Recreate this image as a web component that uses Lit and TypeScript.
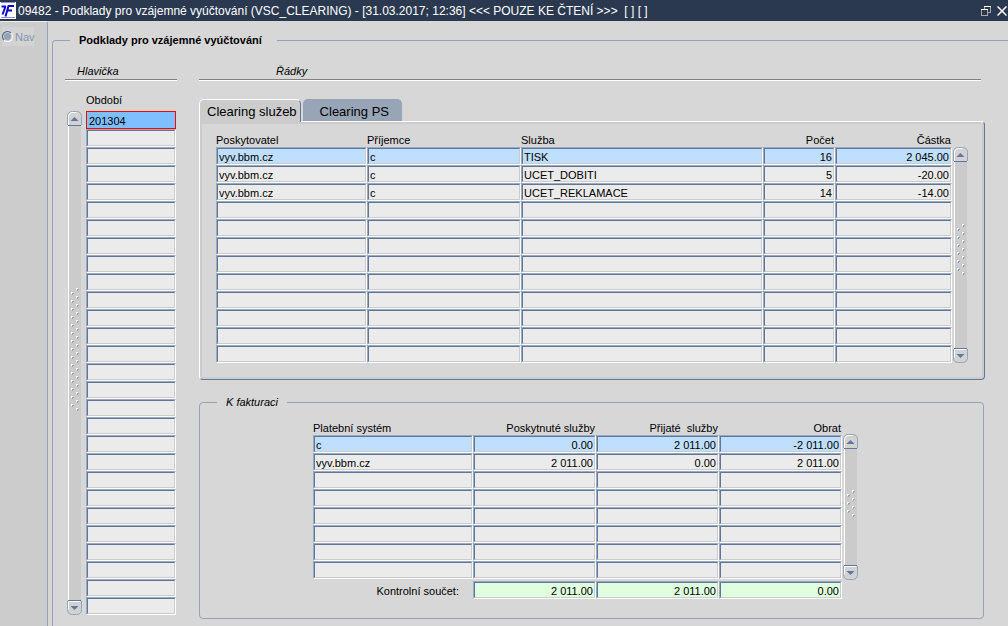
import { LitElement, html, css, svg, nothing } from "lit";
import { customElement, property } from "lit/decorators.js";
import { classMap } from "lit/directives/class-map.js";

interface Column {
  title: string;
  size?: string;
  numeric?: boolean;
}

const CLEARING_COLUMNS: Column[] = [
  { title: "Poskytovatel", size: "w151" },
  { title: "Příjemce", size: "w154" },
  { title: "Služba" },
  { title: "Počet", size: "w72", numeric: true },
  { title: "Částka", size: "w117", numeric: true },
];

const CLEARING_ROWS = [
  ["vyv.bbm.cz", "c", "TISK", "16", "2 045.00"],
  ["vyv.bbm.cz", "c", "UCET_DOBITI", "5", "-20.00"],
  ["vyv.bbm.cz", "c", "UCET_REKLAMACE", "14", "-14.00"],
];

const INVOICE_COLUMNS: Column[] = [
  { title: "Platební systém", size: "w160" },
  { title: "Poskytnuté služby", numeric: true },
  { title: "Přijaté  služby", numeric: true },
  { title: "Obrat", numeric: true },
];

const INVOICE_ROWS = [
  ["c", "0.00", "2 011.00", "-2 011.00"],
  ["vyv.bbm.cz", "2 011.00", "0.00", "2 011.00"],
];

@customElement("record-grid")
class RecordGrid extends LitElement {
  @property({ attribute: false }) columns: Column[] = [];
  @property({ attribute: false }) rows: string[][] = [];
  @property({ attribute: false }) totals: string[] = [];
  @property({ type: Number }) count = 0;
  @property({ type: Boolean }) focusedFirst = false;

  static styles = css`
    :host {
      display: block;
      min-width: 0;
    }
    table {
      width: 100%;
      table-layout: fixed;
      border-collapse: separate;
      border-spacing: 0;
    }
    .w151 { width: 151px; }
    .w154 { width: 154px; }
    .w72 { width: 72px; }
    .w117 { width: 117px; }
    .w160 { width: 160px; }
    th {
      height: 14px;
      padding: 0;
      font: 11px/14px "Liberation Sans", Arial, sans-serif;
      text-align: left;
      white-space: pre;
    }
    th.numeric {
      text-align: right;
      padding-right: 1px;
    }
    .spaced th {
      padding-bottom: 4px;
    }
    td {
      box-sizing: border-box;
      height: 18px;
      padding: 0;
      border: 1px solid;
      border-color: #9aa9bd #fff #fff #9aa9bd;
    }
    input {
      display: block;
      box-sizing: border-box;
      width: 100%;
      height: 16px;
      margin: 0;
      padding: 1px 1px 0 1px;
      border: 1px solid;
      border-color: #5f779b #ccc #ccc #5f779b;
      border-radius: 0;
      outline: none;
      background: #ebebeb;
      color: #000;
      font: 11px/13px "Liberation Sans", Arial, sans-serif;
    }
    .numeric input {
      text-align: right;
    }
    .current input {
      background: #bfdfff;
    }
    .focused td {
      border-color: #f00;
    }
    .focused input {
      background: #80bfff;
      border-color: #80bfff;
    }
    tfoot .gap {
      height: 2px;
      border: 0;
    }
    tfoot input {
      background: #dfffdf;
    }
    tfoot th {
      padding-right: 14px;
      text-align: right;
      vertical-align: bottom;
      line-height: 16px;
    }
  `;

  private cell(column: Column, value: string, prefix: string) {
    return html`<td class=${classMap({ numeric: !!column.numeric })}>
      <input type="text" readonly aria-label="${prefix} ${column.title}" .value=${value} />
    </td>`;
  }

  render() {
    const body = Array.from({ length: this.count }, (_, i) => this.rows[i] ?? []);
    return html`<table>
      <colgroup>
        ${this.columns.map((c) => html`<col class=${c.size ?? ""} />`)}
      </colgroup>
      <thead class=${classMap({ spaced: this.focusedFirst })}>
        <tr>
          ${this.columns.map(
            (c) => html`<th scope="col" class=${classMap({ numeric: !!c.numeric })}>${c.title}</th>`
          )}
        </tr>
      </thead>
      <tbody>
        ${body.map(
          (row, i) => html`<tr
            class=${classMap({ current: i === 0, focused: i === 0 && this.focusedFirst })}
          >
            ${this.columns.map((c, k) => this.cell(c, row[k] ?? "", `${i + 1}`))}
          </tr>`
        )}
      </tbody>
      ${this.totals.length
        ? html`<tfoot>
            <tr><td class="gap" colspan=${this.columns.length}></td></tr>
            <tr>
              <th scope="row">Kontrolní součet:</th>
              ${this.totals.map((v, k) => this.cell(this.columns[k + 1], v, "Kontrolní součet"))}
            </tr>
          </tfoot>`
        : nothing}
    </table>`;
  }
}

@customElement("record-scroller")
class RecordScroller extends LitElement {
  @property({ type: Number }) grips = 4;

  static styles = css`
    :host {
      display: flex;
      flex-direction: column;
      flex: none;
      width: 15px;
    }
    button {
      display: block;
      flex: none;
      width: 15px;
      height: 15px;
      padding: 0;
      border: 0;
      background: none;
    }
    svg {
      display: block;
    }
    .track {
      flex: 1;
      display: flex;
      flex-direction: column;
      align-items: center;
      margin: 0 1px;
      border-left: 1px solid #fff;
      background: #cbcbcb;
    }
    .track::before {
      content: "";
      flex: 43;
    }
    .track::after {
      content: "";
      flex: 50;
    }
  `;

  private arrow(up: boolean) {
    return up
      ? html`<svg width="15" height="15" viewBox="0 0 15 15">
          <path d="M.5 14V5.500Q.5 .5 5.500 .5H9.500Q14.500 .5 14.500 5.500V14" fill="#d2d2d2" stroke="#93a3b9" />
          <path d="M1.500 14V6Q1.500 1.500 6 1.500H9.500" fill="none" stroke="#fff" />
          <path d="M1 14.500H14" stroke="#5f779b" />
          <path d="M3.500 10L7.500 6L11.500 10Z" fill="#5f779b" />
        </svg>`
      : html`<svg width="15" height="15" viewBox="0 0 15 15">
          <path d="M.5 1V9.500Q.5 14.500 5.500 14.500H9.500Q14.500 14.500 14.500 9.500V1" fill="#d2d2d2" stroke="#93a3b9" />
          <path d="M1.500 9.500V1.500H13" fill="none" stroke="#fff" />
          <path d="M1 .5H14" stroke="#5f779b" />
          <path d="M3.500 6L7.500 10L11.500 6Z" fill="#5f779b" />
        </svg>`;
  }

  private dot(x: number, y: number) {
    return svg`<path d="M${x + 1} ${y + 1}h2v1h-1v1h-1z" fill="#93a3b9" /><path d="M${x} ${y}h2v1h-1v1h-1z" fill="#fff" />`;
  }

  render() {
    const height = (this.grips - 1) * 8 + 3;
    const right = Array.from({ length: this.grips }, (_, i) => this.dot(5, i * 8));
    const left = Array.from({ length: this.grips - 1 }, (_, i) => this.dot(0, i * 8 + 4));
    return html`
      <button type="button" aria-label="Nahoru">${this.arrow(true)}</button>
      <div class="track">
        <svg width="8" height=${height} shape-rendering="crispEdges">${right}${left}</svg>
      </div>
      <button type="button" aria-label="Dolů">${this.arrow(false)}</button>
    `;
  }
}

@customElement("app-root")
class AppRoot extends LitElement {
  static styles = css`
    :host {
      display: flex;
      flex-direction: column;
      min-height: 100vh;
      background: #d7d7d7;
      color: #000;
      font: 11px/14px "Liberation Sans", Arial, sans-serif;
    }
    .titlebar {
      display: flex;
      align-items: center;
      box-sizing: border-box;
      height: 21px;
      background: #2b3950;
      color: #fff;
    }
    .titlebar h1 {
      flex: 1;
      margin: 0 0 0 2px;
      padding-top: 1px;
      font-size: 12px;
      font-weight: 400;
      line-height: 20px;
      white-space: pre;
    }
    .titlebar svg {
      display: block;
    }
    .titlebar button {
      padding: 0;
      border: 0;
      background: none;
    }
    .window-buttons {
      display: flex;
      gap: 6px;
      padding-right: 1px;
    }
    .body {
      flex: 1;
      display: flex;
    }
    .nav {
      flex: none;
      box-sizing: border-box;
      width: 48px;
      padding: 5px 0 0 2px;
      border-top: 1px solid #eee;
      border-right: 1px solid #93a3b9;
      border-top-right-radius: 3px;
      background: #ccc;
    }
    .nav label {
      display: flex;
      align-items: center;
      gap: 2px;
      width: 32px;
      height: 19px;
      background: #d3d3d3;
      color: #8496b3;
    }
    .nav input {
      appearance: none;
      flex: none;
      box-sizing: border-box;
      width: 11px;
      height: 11px;
      margin: 0;
      border: 1px solid;
      border-color: #56657c #fff #fff #56657c;
      border-radius: 50%;
      background: #93a3b9;
      box-shadow: inset 0 0 0 1px #ccc;
    }
    fieldset {
      min-width: 0;
      margin: 0;
      border: 1px solid #93a3b9;
      border-radius: 4px;
    }
    .main {
      flex: 1;
      margin: 12px 0 0 4px;
      padding: 17px 23px 3px 12px;
      border-width: 1px 0 0 1px;
      border-radius: 4px 0 0 0;
    }
    .main > legend {
      margin-left: 5px;
      padding: 0 15px 0 9px;
      font-weight: 700;
    }
    .columns {
      display: grid;
      grid-template-columns: 112px minmax(0, 1fr);
      column-gap: 22px;
    }
    h2 {
      margin: 0;
      padding: 0 0 1px 12px;
      border-bottom: 1px solid #808080;
      box-shadow: 0 1px #fff;
      font-size: 11px;
      font-weight: 400;
      font-style: italic;
      line-height: 14px;
    }
    .lines h2 {
      margin-right: 4px;
      padding-left: 77px;
    }
    .periods {
      display: flex;
      gap: 4px;
      padding: 13px 1px 0 2px;
    }
    .periods record-grid {
      flex: 1;
    }
    .periods record-scroller {
      margin-top: 18px;
    }
    .clearing record-scroller {
      margin-top: 14px;
    }
    .tabs {
      display: flex;
      align-items: flex-start;
      gap: 2px;
      padding-top: 19px;
    }
    .tabs button {
      box-sizing: border-box;
      height: 22px;
      padding: 2px 12px 0 16px;
      border: 1px solid #98a5b7;
      border-bottom: 0;
      border-radius: 5px 5px 0 0;
      background: #98a5b7;
      color: #000;
      font: 13px/19px "Liberation Sans", Arial, sans-serif;
    }
    .tabs button.active {
      position: relative;
      height: 23px;
      margin-bottom: -1px;
      padding: 1px 3px 0 7px;
      border-color: #fff #5f779b #fff #fff;
      background: #ccc;
    }
    .clearing {
      display: flex;
      gap: 1px;
      padding: 11px 16px 16px 16px;
      border: 1px solid;
      border-color: #fff #5f779b #5f779b #fff;
      border-radius: 0 4px 4px 4px;
      box-shadow: inset 0 0 0 2px #ccc;
    }
    .clearing record-grid,
    .invoice record-grid {
      flex: 1;
    }
    .invoice {
      margin: 15px 1px 0 0;
      padding: 12px 125px 19px 113px;
    }
    .invoice legend {
      margin-left: -96px;
      padding: 0 9px;
      font-style: italic;
    }
    .invoice-body {
      display: flex;
      gap: 1px;
    }
    .invoice record-scroller {
      margin: 13px 0 19px;
    }
  `;

  render() {
    return html`
      <header class="titlebar">
        <svg width="16" height="17" viewBox="0 0 16 17">
          <rect width="16" height="17" fill="#fff" />
          <path d="M1 .5H15M15 15.500H1" fill="none" stroke="#8a8af0" />
          <path d="M1.500 4.500H6M5.500 4.500L2.500 12.500" fill="none" stroke="#0a0ac8" stroke-width="2" />
          <path d="M14 4H8.500L5.500 14.500M7.500 8.500H12" fill="none" stroke="#0a0ac8" stroke-width="2" />
        </svg>
        <h1>09482 - Podklady pro vzájemné vyúčtování (VSC_CLEARING) - [31.03.2017; 12:36] &lt;&lt;&lt; POUZE KE ČTENÍ &gt;&gt;&gt;  [ ] [ ]</h1>
        <div class="window-buttons">
          <button type="button" aria-label="Obnovit">
            <svg width="10" height="10" viewBox="0 0 10 10" fill="none" shape-rendering="crispEdges">
              <path d="M3.500 3V.5M9.500 1V6.500H7M.5 4V9.500H6.500V4" stroke="#a9a9a9" />
              <path d="M3 .5H10M0 3.500H7" stroke="#fff" />
            </svg>
          </button>
          <button type="button" aria-label="Zavřít">
            <svg width="10" height="10" viewBox="0 0 10 10">
              <path d="M.5 .5L9.500 9.500M9.500 .5L.5 9.500" stroke="#fff" stroke-width="1.500" />
            </svg>
          </button>
        </div>
      </header>
      <div class="body">
        <nav class="nav">
          <label><input type="radio" name="mode" disabled />Nav</label>
        </nav>
        <fieldset class="main">
          <legend>Podklady pro vzájemné vyúčtování</legend>
          <div class="columns">
            <section>
              <h2>Hlavička</h2>
              <div class="periods">
                <record-scroller .grips=${16}></record-scroller>
                <record-grid
                  .columns=${[{ title: "Období" }]}
                  .rows=${[["201304"]]}
                  .count=${28}
                  .focusedFirst=${true}
                ></record-grid>
              </div>
            </section>
            <section class="lines">
              <h2>Řádky</h2>
              <div class="tabs" role="tablist">
                <button type="button" role="tab" aria-selected="true" class="active">Clearing služeb</button>
                <button type="button" role="tab" aria-selected="false">Clearing PS</button>
              </div>
              <div class="clearing" role="tabpanel">
                <record-grid .columns=${CLEARING_COLUMNS} .rows=${CLEARING_ROWS} .count=${12}></record-grid>
                <record-scroller .grips=${7}></record-scroller>
              </div>
              <fieldset class="invoice">
                <legend>K fakturaci</legend>
                <div class="invoice-body">
                  <record-grid
                    .columns=${INVOICE_COLUMNS}
                    .rows=${INVOICE_ROWS}
                    .totals=${["2 011.00", "2 011.00", "0.00"]}
                    .count=${8}
                  ></record-grid>
                  <record-scroller .grips=${4}></record-scroller>
                </div>
              </fieldset>
            </section>
          </div>
        </fieldset>
      </div>
    `;
  }
}
